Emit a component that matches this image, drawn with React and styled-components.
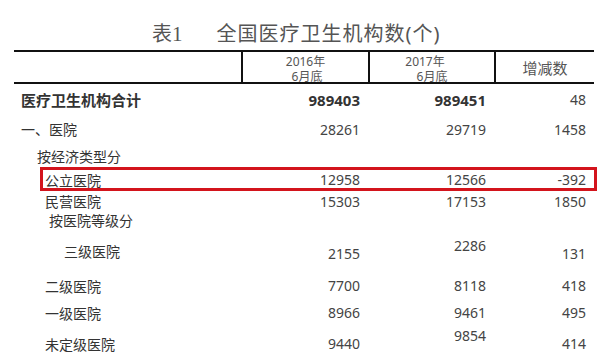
import React from 'react'
import styled, { createGlobalStyle } from 'styled-components'

const Global = createGlobalStyle`
  html, body {
    margin: 0;
    padding: 0;
    background: #fff;
  }
  body {
    font-family: "Noto Sans", "Noto Sans CJK SC", sans-serif;
    color: #333;
  }
`

const rows = [
  { label: '医疗卫生机构合计', indent: 7, h: 31, bold: true, a: '989403', b: '989451', c: '48' },
  { label: '一、医院', indent: 7, h: 28, a: '28261', b: '29719', c: '1458' },
  { label: '按经济类型分', indent: 23, h: 25 },
  { label: '公立医院', indent: 31, h: 23, a: '12958', b: '12566', c: '-392', mark: true },
  { label: '民营医院', indent: 31, h: 19, a: '15303', b: '17153', c: '1850' },
  { label: '按医院等级分', indent: 35, h: 20 },
  { label: '三级医院', indent: 50, h: 42, a: '2155', b: '2286', c: '131', down: 4, bUp: 12 },
  { label: '二级医院', indent: 31, h: 27, a: '7700', b: '8118', c: '418' },
  { label: '一级医院', indent: 31, h: 27, a: '8966', b: '9461', c: '495' },
  { label: '未定级医院', indent: 31, h: 34, a: '9440', b: '9854', c: '414', bUp: 16 },
]

export default function App() {
  return (
    <>
      <Global />
      <Page>
        <Title>
          <span>表<Serif>1</Serif></span>
          <TitleMain>全国医疗卫生机构数(个)</TitleMain>
        </Title>
        <Table>
          <Head>
            <HeadCell />
            <HeadCell $line>
              <HeadLine>2016年</HeadLine>
              <HeadLine $nudge={-3}>6月底</HeadLine>
            </HeadCell>
            <HeadCell $line>
              <HeadLine $nudge={14}>2017年</HeadLine>
              <HeadLine>6月底</HeadLine>
            </HeadCell>
            <HeadCell $line $big>增减数</HeadCell>
          </Head>
          {rows.map((r) => (
            <Row key={r.label} $h={r.h} $mark={r.mark}>
              <Label $indent={r.indent} $bold={r.bold}>{r.label}</Label>
              <Num $bold={r.bold} $down={r.down}>{r.a}</Num>
              <Num $bold={r.bold} $up={r.bUp} $down={r.bUp ? 0 : r.down}>{r.b}</Num>
              <Num $down={r.down}>{r.c}</Num>
            </Row>
          ))}
        </Table>
      </Page>
    </>
  )
}

const Page = styled.div`
  width: 616px;
  height: 354px;
  overflow: hidden;
  padding-left: 14px;
  box-sizing: border-box;
`

const Title = styled.div`
  height: 50px;
  display: flex;
  align-items: center;
  padding-left: 138px;
  padding-top: 18px;
  box-sizing: border-box;
  font-size: 20px;
  color: #555;
  gap: 34px;
  line-height: 1;
`

const Serif = styled.span`
  font-family: "Liberation Serif", serif;
  font-size: 21px;
`

const TitleMain = styled.span`
  letter-spacing: 1px;
`

const Table = styled.div`
  width: 580px;
`

const cols = `227px 127px 126px 100px`

const Head = styled.div`
  display: grid;
  grid-template-columns: ${cols};
  height: 34px;
  box-sizing: border-box;
  border-top: 2px solid #111;
  border-bottom: 2px solid #111;
`

const HeadCell = styled.div`
  display: flex;
  flex-direction: column;
  align-items: center;
  justify-content: center;
  border-left: ${(p) => (p.$line ? '2px solid #111' : 'none')};
  font-size: ${(p) => (p.$big ? '15px' : '12px')};
  color: #555;
  line-height: ${(p) => (p.$big ? '20px' : '15px')};
  padding-top: ${(p) => (p.$big ? '0' : '2px')};
`

const HeadLine = styled.span`
  display: block;
  line-height: 15px;
  padding-right: ${(p) => (p.$nudge > 0 ? p.$nudge : 0)}px;
  padding-left: ${(p) => (p.$nudge < 0 ? -p.$nudge : 0)}px;
`

const Row = styled.div`
  display: grid;
  grid-template-columns: ${cols};
  height: ${(p) => p.$h}px;
  align-items: center;
  position: relative;

  &::after {
    content: '';
    display: ${(p) => (p.$mark ? 'block' : 'none')};
    position: absolute;
    left: 26px;
    right: -3px;
    top: -1px;
    bottom: 0;
    border: 3px solid #d3141c;
  }
`

const Label = styled.div`
  padding-left: ${(p) => p.$indent}px;
  font-size: ${(p) => (p.$bold ? '15px' : '14px')};
  font-weight: ${(p) => (p.$bold ? 700 : 400)};
  color: #333;
  white-space: nowrap;
`

const Num = styled.div`
  text-align: right;
  padding-right: 8px;
  font-size: ${(p) => (p.$bold ? '15px' : '14px')};
  font-weight: ${(p) => (p.$bold ? 700 : 400)};
  color: ${(p) => (p.$bold ? '#333' : '#444')};
  padding-bottom: ${(p) => p.$up || 0}px;
  padding-top: ${(p) => p.$down || 0}px;
`
